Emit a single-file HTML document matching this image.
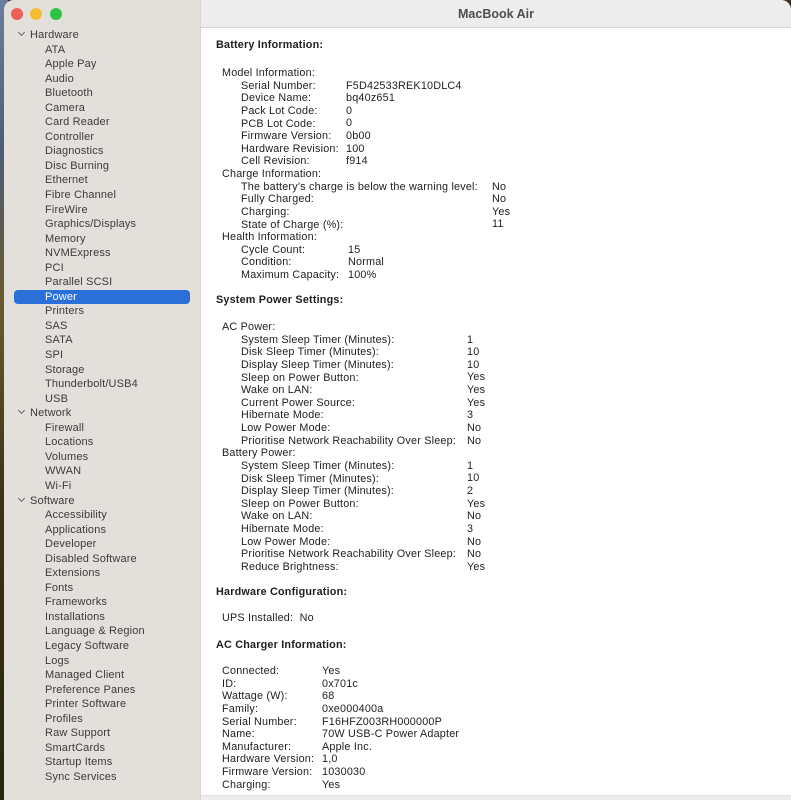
<!DOCTYPE html>
<html><head><meta charset="utf-8"><style>
*{margin:0;padding:0;box-sizing:border-box}
body{width:791px;height:800px;overflow:hidden;position:relative;font-family:"Liberation Sans",sans-serif;background:#3a3220}
#wall{position:absolute;left:0;top:0;width:8px;height:800px;background:linear-gradient(#6b7da0 0,#4d5c78 150px,#6a5a2e 300px,#3b3215 500px,#2a2410 800px)}
#win{position:absolute;left:4px;top:0;width:787px;height:800px;border-radius:10px 10px 0 0;overflow:hidden;background:#fff}
#side{position:absolute;left:0;top:0;width:197px;height:800px;background:#e3e0dc;border-right:1px solid #d8d6d3}
#title{position:absolute;left:197px;top:0;right:0;height:28px;background:#ededed;border-bottom:1px solid #d6d6d6;text-align:center;font-weight:bold;font-size:12.5px;color:#4e4e4e;line-height:28px}
.dot{position:absolute;top:8px;width:12px;height:12px;border-radius:50%}
.s{position:absolute;font-size:11px;letter-spacing:0.15px;color:#3b3b3b;line-height:14.55px;white-space:nowrap}
.s div{height:14.55px}
.s .h{margin-left:-26px}
.sel{position:absolute;left:10px;top:290px;width:176px;height:14px;border-radius:4px;background:#2b6fd8}
.c{position:absolute;font-size:10.8px;letter-spacing:0.2px;color:#1e1e1e;line-height:12.63px;white-space:nowrap}
.c div{height:12.63px}
.hd{position:absolute;font-size:10.8px;letter-spacing:0.2px;font-weight:bold;color:#1e1e1e;white-space:nowrap}
.chev{display:inline-block;width:5px;height:5px;border-right:1.2px solid #666;border-bottom:1.2px solid #666;transform:rotate(45deg);margin-right:6px;position:relative;top:-3px}
</style></head><body>
<div id="wall"></div>
<div id="win">
<div id="side">
<div class="dot" style="left:7px;background:#ee5f58"></div>
<div class="dot" style="left:26px;background:#f5bd30"></div>
<div class="dot" style="left:46px;background:#2fc444"></div>
<div class="sel"></div>
<div class="s" style="left:41px;top:28px">
<div class="h"><span class="chev"></span>Hardware</div>
<div>ATA</div><div>Apple Pay</div><div>Audio</div><div>Bluetooth</div><div>Camera</div><div>Card Reader</div><div>Controller</div><div>Diagnostics</div><div>Disc Burning</div><div>Ethernet</div><div>Fibre Channel</div><div>FireWire</div><div>Graphics/Displays</div><div>Memory</div><div>NVMExpress</div><div>PCI</div><div>Parallel SCSI</div><div style="color:#fff">Power</div><div>Printers</div><div>SAS</div><div>SATA</div><div>SPI</div><div>Storage</div><div>Thunderbolt/USB4</div><div>USB</div>
<div class="h"><span class="chev"></span>Network</div>
<div>Firewall</div><div>Locations</div><div>Volumes</div><div>WWAN</div><div>Wi-Fi</div>
<div class="h"><span class="chev"></span>Software</div>
<div>Accessibility</div><div>Applications</div><div>Developer</div><div>Disabled Software</div><div>Extensions</div><div>Fonts</div><div>Frameworks</div><div>Installations</div><div>Language &amp; Region</div><div>Legacy Software</div><div>Logs</div><div>Managed Client</div><div>Preference Panes</div><div>Printer Software</div><div>Profiles</div><div>Raw Support</div><div>SmartCards</div><div>Startup Items</div><div>Sync Services</div>
</div>
</div>
<div id="title">MacBook Air</div>
</div>
<div class="hd" style="left:216px;top:39px">Battery Information:</div>
<div class="c" style="left:222px;top:67px">
<div>Model Information:</div>
<div style="padding-left:19px">Serial Number:</div><div style="padding-left:19px">Device Name:</div><div style="padding-left:19px">Pack Lot Code:</div><div style="padding-left:19px">PCB Lot Code:</div><div style="padding-left:19px">Firmware Version:</div><div style="padding-left:19px">Hardware Revision:</div><div style="padding-left:19px">Cell Revision:</div>
<div>Charge Information:</div>
<div style="padding-left:19px">The battery’s charge is below the warning level:</div><div style="padding-left:19px">Fully Charged:</div><div style="padding-left:19px">Charging:</div><div style="padding-left:19px">State of Charge (%):</div>
<div>Health Information:</div>
<div style="padding-left:19px">Cycle Count:</div><div style="padding-left:19px">Condition:</div><div style="padding-left:19px">Maximum Capacity:</div>
</div>
<div class="c" style="left:346px;top:79.6px"><div>F5D42533REK10DLC4</div><div>bq40z651</div><div>0</div><div>0</div><div>0b00</div><div>100</div><div>f914</div></div>
<div class="c" style="left:492px;top:180.6px"><div>No</div><div>No</div><div>Yes</div><div>11</div></div>
<div class="c" style="left:348px;top:243.8px"><div>15</div><div>Normal</div><div>100%</div></div>

<div class="hd" style="left:216px;top:294px">System Power Settings:</div>
<div class="c" style="left:222px;top:321px">
<div>AC Power:</div>
<div style="padding-left:19px">System Sleep Timer (Minutes):</div><div style="padding-left:19px">Disk Sleep Timer (Minutes):</div><div style="padding-left:19px">Display Sleep Timer (Minutes):</div><div style="padding-left:19px">Sleep on Power Button:</div><div style="padding-left:19px">Wake on LAN:</div><div style="padding-left:19px">Current Power Source:</div><div style="padding-left:19px">Hibernate Mode:</div><div style="padding-left:19px">Low Power Mode:</div><div style="padding-left:19px">Prioritise Network Reachability Over Sleep:</div>
<div>Battery Power:</div>
<div style="padding-left:19px">System Sleep Timer (Minutes):</div><div style="padding-left:19px">Disk Sleep Timer (Minutes):</div><div style="padding-left:19px">Display Sleep Timer (Minutes):</div><div style="padding-left:19px">Sleep on Power Button:</div><div style="padding-left:19px">Wake on LAN:</div><div style="padding-left:19px">Hibernate Mode:</div><div style="padding-left:19px">Low Power Mode:</div><div style="padding-left:19px">Prioritise Network Reachability Over Sleep:</div><div style="padding-left:19px">Reduce Brightness:</div>
</div>
<div class="c" style="left:467px;top:333.6px"><div>1</div><div>10</div><div>10</div><div>Yes</div><div>Yes</div><div>Yes</div><div>3</div><div>No</div><div>No</div><div></div><div>1</div><div>10</div><div>2</div><div>Yes</div><div>No</div><div>3</div><div>No</div><div>No</div><div>Yes</div></div>

<div class="hd" style="left:216px;top:586px">Hardware Configuration:</div>
<div class="c" style="left:222px;top:612px"><div>UPS Installed:&nbsp; No</div></div>

<div class="hd" style="left:216px;top:639px">AC Charger Information:</div>
<div class="c" style="left:222px;top:665px"><div>Connected:</div><div>ID:</div><div>Wattage (W):</div><div>Family:</div><div>Serial Number:</div><div>Name:</div><div>Manufacturer:</div><div>Hardware Version:</div><div>Firmware Version:</div><div>Charging:</div></div>
<div class="c" style="left:322px;top:665px"><div>Yes</div><div>0x701c</div><div>68</div><div>0xe000400a</div><div>F16HFZ003RH000000P</div><div>70W USB-C Power Adapter</div><div>Apple Inc.</div><div>1,0</div><div>1030030</div><div>Yes</div></div>
<div style="position:absolute;left:201px;right:0;top:795px;height:5px;background:#ededed;border-top:1px solid #ddd"></div>
</body></html>
